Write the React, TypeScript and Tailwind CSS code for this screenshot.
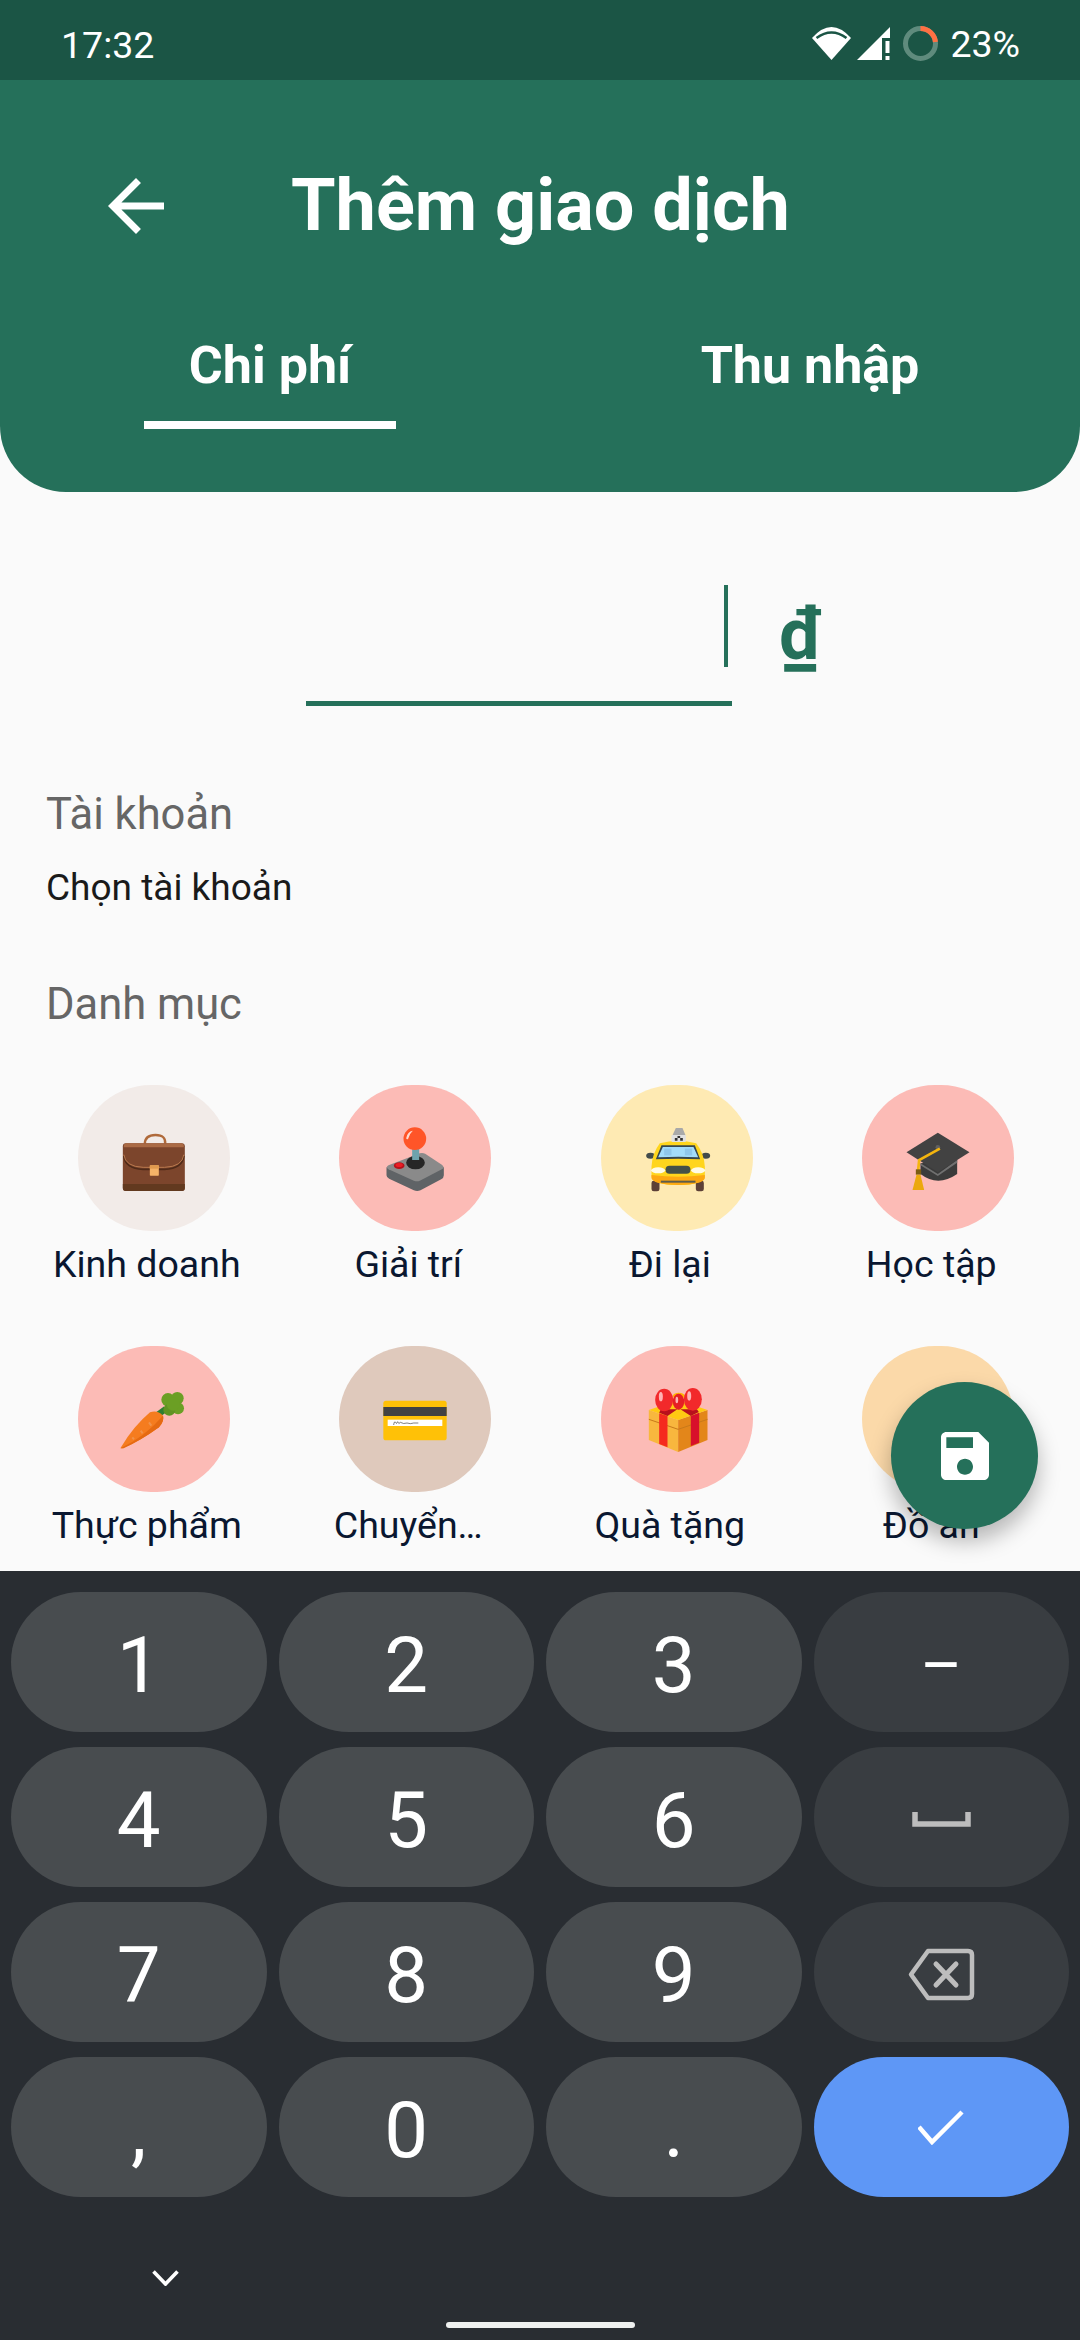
import React from "react";

const Briefcase = () => (
  <svg width="120" height="100" viewBox="-19.5 -6 360 300">
    <path d="M133 102 Q133 75 165 75 Q197 75 194 102" fill="none" stroke="#b06a3b" strokeWidth="7" />
    <rect x="67" y="100" width="186" height="143" rx="9" fill="#7c452c" />
    <path d="M67 222 H253 V234 Q253 243 244 243 H76 Q67 243 67 234Z" fill="#62391f" />
    <path d="M70 108 Q70 100 78 100 H242 Q250 100 250 108 V112 H70Z" fill="#aa6a45" />
    <path d="M70 138 Q74 176 128 178 H192 Q246 176 250 138" fill="none" stroke="#4f2a18" strokeWidth="5" />
    <path d="M70 134 Q74 170 128 172 H192 Q246 170 250 134" fill="none" stroke="#b9794e" strokeWidth="3" />
    <rect x="148" y="166" width="27" height="31" rx="2" fill="#f5b368" />
    <rect x="148" y="166" width="27" height="10" fill="#e09a4e" />
  </svg>
);

const Joystick = () => (
  <svg width="120" height="100" viewBox="-16.5 -6 360 300">
    <path d="M78 172 V196 Q78 202 86 206 L160 241 Q170 245 180 241 L242 208 Q250 204 250 196 V172Z" fill="#5f6366" />
    <path d="M84 166 L178 130 Q186 128 194 131 L244 164 Q254 172 244 178 L178 212 Q170 216 160 212 L84 178 Q74 172 84 166Z" fill="#8a8a8a" />
    <ellipse cx="116" cy="167" rx="16" ry="10" fill="#b5121b" />
    <ellipse cx="116" cy="165" rx="11" ry="6" fill="#ec1c24" />
    <ellipse cx="165" cy="158" rx="28" ry="20" fill="#262626" />
    <rect x="155" y="108" width="21" height="42" fill="#6fa3ad" />
    <circle cx="163" cy="86" r="34" fill="#ff5528" />
    <path d="M137 85 Q140 65 157 62 Q146 72 143 86 Q139 90 137 85Z" fill="#ffd9cf" />
  </svg>
);

const Taxi = () => (
  <svg width="120" height="100" viewBox="-13.5 -6 360 300">
    <rect x="90" y="212" width="24" height="32" rx="7" fill="#5d4037" />
    <rect x="223" y="212" width="24" height="32" rx="7" fill="#5d4037" />
    <ellipse cx="87" cy="137" rx="13" ry="9" fill="#424b4b" />
    <ellipse cx="253" cy="137" rx="13" ry="9" fill="#424b4b" />
    <path d="M90 170 Q92 130 115 100 Q170 85 224 100 Q248 130 250 170 V200 Q246 224 170 225 Q94 224 90 200Z" fill="#ffd51d" />
    <path d="M90 195 Q170 205 250 195 V205 Q244 224 170 225 Q96 224 90 205Z" fill="#fda812" />
    <path d="M103 148 L120 106 H220 L236 148 Q170 144 103 148Z" fill="#37474f" />
    <path d="M110 142 L124 111 H216 L230 142 Q170 138 110 142Z" fill="#a3dcfb" />
    <rect x="128" y="116" width="22" height="20" fill="#8fc7ec" />
    <rect x="190" y="116" width="22" height="20" fill="#8fc7ec" />
    <rect x="132" y="167" width="75" height="24" rx="12" fill="#455048" />
    <ellipse cx="110" cy="181" rx="21" ry="9" fill="#fffbe6" />
    <ellipse cx="230" cy="181" rx="21" ry="9" fill="#fffbe6" />
    <rect x="118" y="212" width="104" height="6" fill="#5c5c4c" />
    <path d="M163 54 H183 L192 76 H153Z" fill="#a9a9a9" />
    <rect x="150" y="75" width="43" height="21" rx="2" fill="#e0e0e0" />
    <path d="M160 84h8v8h-8zM176 84h8v8h-8zM168 78h8v6h-8z" fill="#333" />
  </svg>
);

const Cap = () => (
  <svg width="120" height="100" viewBox="-7.5 -6 360 300">
    <path d="M120 160 V192 Q172 232 230 192 V150Z" fill="#3b3b3b" />
    <path d="M120 160 L172 192 L230 150 V158 L172 198 L120 166Z" fill="#707070" />
    <path d="M172 68 L267 127 L172 187 L78 127Z" fill="#424242" />
    <circle cx="172" cy="112" r="7" fill="#616161" />
    <path d="M178 116 L116 150 L113 180" fill="none" stroke="#f4b50e" strokeWidth="8" />
    <rect x="106" y="178" width="16" height="16" fill="#7a5c12" />
    <path d="M108 194 H120 L131 240 H96Z" fill="#eba80d" />
  </svg>
);

const Carrot = () => (
  <svg width="120" height="100" viewBox="0 0 360 300">
    <path d="M180 145 L215 120" stroke="#2e7d32" strokeWidth="18" />
    <path d="M80 236 Q120 170 168 130 Q190 122 207 140 Q212 155 195 175 Q140 215 88 238 Q78 240 80 236Z" fill="#f57c1f" />
    <path d="M82 236 Q150 205 207 140 Q212 155 195 175 Q140 215 88 238Z" fill="#e56a12" />
    <path d="M165 160l7 10M140 185l6 8M115 205l5 6" stroke="#f0924a" strokeWidth="6" />
    <circle cx="222" cy="92" r="20" fill="#6b9f24" />
    <circle cx="250" cy="88" r="19" fill="#6b9f24" />
    <circle cx="252" cy="118" r="18" fill="#6b9f24" />
    <circle cx="226" cy="122" r="18" fill="#5f9322" />
    <circle cx="238" cy="105" r="20" fill="#6b9f24" />
  </svg>
);

const Card = () => (
  <svg width="120" height="100" viewBox="0 0 360 300">
    <rect x="85" y="95" width="190" height="119" rx="8" fill="#ffc107" />
    <rect x="85" y="114" width="190" height="27" fill="#424242" />
    <rect x="98" y="152" width="164" height="19" fill="#ffffff" />
    <path d="M116 168 Q118 154 122 160 Q124 168 128 158 Q131 168 136 160 Q146 166 156 162 Q166 166 176 162 H190" fill="none" stroke="#424242" strokeWidth="2" />
  </svg>
);

const Gift = () => (
  <svg width="120" height="100" viewBox="-13.5 -3 360 300">
    <path d="M82 120 L170 150 V246 L82 210Z" fill="#f8b73e" />
    <path d="M170 150 L258 120 V210 L170 246Z" fill="#e3861a" />
    <path d="M82 120 L170 90 L258 120 L170 150Z" fill="#ffc913" />
    <path d="M82 148 L170 178 L258 148" fill="none" stroke="#c8791a" strokeWidth="3" />
    <path d="M113 130 L138 138 V232 L113 222Z" fill="#f52a1e" />
    <path d="M208 138 L233 128 V218 L208 228Z" fill="#d8102b" />
    <path d="M118 118 H226 L232 126 L208 138 L172 115 L138 138 L113 128Z" fill="#b8101c" />
    <ellipse cx="172" cy="78" rx="18" ry="10" fill="#ffb300" />
    <ellipse cx="128" cy="90" rx="27" ry="34" fill="#f2292b" />
    <ellipse cx="214" cy="88" rx="27" ry="34" fill="#f2292b" />
    <ellipse cx="171" cy="95" rx="17" ry="24" fill="#e61f25" />
    <ellipse cx="118" cy="80" rx="6" ry="14" fill="#ffb3b3" />
    <ellipse cx="203" cy="78" rx="6" ry="14" fill="#ffb3b3" />
    <ellipse cx="166" cy="90" rx="4" ry="10" fill="#ffb3b3" />
  </svg>
);

const Burger = () => (
  <svg width="120" height="100" viewBox="0 0 360 300">
    <path d="M80 150 Q90 85 180 85 Q270 85 280 150Z" fill="#d98a1e" />
    <rect x="80" y="150" width="200" height="70" rx="16" fill="#8d5524" />
  </svg>
);

const cats = [
  { label: "Kinh doanh", bg: "bg-[#f2ebe8]", icon: <Briefcase /> },
  { label: "Giải trí", bg: "bg-[#fcbbb6]", icon: <Joystick /> },
  { label: "Đi lại", bg: "bg-[#feeab3]", icon: <Taxi /> },
  { label: "Học tập", bg: "bg-[#fcbbb6]", icon: <Cap /> },
  { label: "Thực phẩm", bg: "bg-[#fcbbb6]", icon: <Carrot /> },
  { label: "Chuyển…", bg: "bg-[#dfc9bc]", icon: <Card /> },
  { label: "Quà tặng", bg: "bg-[#fcbbb6]", icon: <Gift /> },
  { label: "Đồ ăn", bg: "bg-[#fbd9a9]", icon: <Burger /> },
];

const Key = ({ children }: { children: React.ReactNode }) => (
  <div className="h-[140px] rounded-full bg-[#484c4f] text-center text-[78px] leading-[132px] pt-[8px] text-white">{children}</div>
);

const FnKey = ({ children, blue }: { children: React.ReactNode; blue?: boolean }) => (
  <div className={blue ? "h-[140px] rounded-full bg-[#5e97f6] flex items-center justify-center" : "h-[140px] rounded-full bg-[#393d41] flex items-center justify-center"}>
    {children}
  </div>
);

export default function App() {
  return (
    <div className="relative w-[1080px] h-[2340px] overflow-hidden flex flex-col bg-[#fafafa] font-['Roboto',sans-serif]">
      {/* status bar */}
      <div className="h-[80px] shrink-0 bg-[#1b5545] flex items-center pl-[61px] pr-[60px] text-white text-[37.5px] leading-[44px]">
        <span className="pt-[9px]">17:32</span>
        <div className="ml-auto flex items-center pt-[6px]">
          <svg width="39" height="33" viewBox="0 0 39 33">
            <path d="M0 11 Q19.5 -11 39 11 L19.5 33Z" fill="#ffffff" />
            <path d="M4.5 11 Q19.5 0 34.5 11" fill="none" stroke="#1b5545" strokeWidth="2.6" />
          </svg>
          <svg width="33" height="33" viewBox="0 0 33 33" className="ml-[6px]">
            <path d="M0 33 L33 0 V11 H25 V33Z" fill="#ffffff" />
            <rect x="28.5" y="14" width="4" height="12" fill="#ffffff" />
            <rect x="28.5" y="29" width="4" height="4" fill="#ffffff" />
          </svg>
          <svg width="35" height="35" viewBox="0 0 35 35" className="ml-[13px]">
            <circle cx="17.5" cy="17.5" r="15" fill="none" stroke="#5f8b7d" strokeWidth="5" />
            <path d="M17.5 2.5 A15 15 0 0 1 32.4 16" fill="none" stroke="#ff7043" strokeWidth="5" />
          </svg>
          <span className="ml-[12px] pt-[2px]">23%</span>
        </div>
      </div>

      {/* header */}
      <div className="h-[412px] shrink-0 bg-[#25705a] rounded-b-[66px] text-white">
        <div className="mt-[76px] h-[100px] flex items-center pl-[94px]">
          <svg width="84" height="84" viewBox="0 0 24 24" fill="#ffffff">
            <path d="M20 11H7.83l5.59-5.59L12 4l-8 8 8 8 1.41-1.41L7.83 13H20v-2z" />
          </svg>
          <span className="ml-[113px] text-[72px] leading-[100px] font-bold">Thêm giao dịch</span>
        </div>
        <div className="grid grid-cols-2 mt-[80px]">
          <div className="flex flex-col items-center">
            <span className="text-[52px] leading-[60px] font-bold">Chi phí</span>
            <div className="mt-[25px] w-[252px] h-[8px] bg-white" />
          </div>
          <div className="flex flex-col items-center">
            <span className="text-[52px] leading-[60px] font-bold">Thu nhập</span>
          </div>
        </div>
      </div>

      {/* body */}
      <div className="flex-1 min-h-0 overflow-hidden">
        <div className="flex items-start mt-[90px] ml-[306px]">
          <div className="w-[426px] h-[124px] border-b-[5px] border-[#25705a] flex justify-end pr-[4px]">
            <div className="w-[4px] h-[82px] mt-[3px] bg-[#25705a]" />
          </div>
          <span className="ml-[47px] mt-[3px] text-[72px] leading-[100px] font-bold text-[#25705a]">₫</span>
        </div>
        <div className="ml-[46px] mt-[84px] text-[43.5px] leading-[50px] text-[#666666]">Tài khoản</div>
        <div className="ml-[46px] mt-[26px] text-[37px] leading-[44px] text-[#1a1a1a]">Chọn tài khoản</div>
        <div className="ml-[46px] mt-[70px] text-[43.5px] leading-[50px] text-[#666666]">Danh mục</div>
        <div className="mt-[55px] ml-[23px] w-[1046px] grid grid-cols-4 gap-y-[60px]">
          {cats.map((c) => (
            <div key={c.label} className="flex flex-col items-center">
              <div className={`w-[152px] h-[146px] rounded-full flex items-center justify-center overflow-hidden ${c.bg}`}>{c.icon}</div>
              <div className="mt-[11px] pr-[14px] text-[37.5px] leading-[44px] text-[#0a1730] whitespace-nowrap">{c.label}</div>
            </div>
          ))}
        </div>
      </div>

      {/* keyboard */}
      <div className="h-[769px] shrink-0 bg-[#292d32] pt-[21px]">
        <div className="grid grid-cols-4 gap-x-[12px] gap-y-[15px] px-[11px]">
          <Key>1</Key>
          <Key>2</Key>
          <Key>3</Key>
          <FnKey>
            <span className="text-white text-[64px] leading-none pt-[10px]">–</span>
          </FnKey>
          <Key>4</Key>
          <Key>5</Key>
          <Key>6</Key>
          <FnKey>
            <svg width="59" height="15" viewBox="0 0 59 15" className="mt-[4px]">
              <path d="M3 0 V12 H56 V0" fill="none" stroke="#bdbdbd" strokeWidth="5.5" />
            </svg>
          </FnKey>
          <Key>7</Key>
          <Key>8</Key>
          <Key>9</Key>
          <FnKey>
            <svg width="67" height="53" viewBox="0 0 67 53" className="mt-[4px]">
              <path d="M3 26.5 L20 3 H60 Q64 3 64 7 V46 Q64 50 60 50 H20Z" fill="none" stroke="#bdbdbd" strokeWidth="4.5" strokeLinejoin="round" />
              <path d="M28 16 L48 37 M48 16 L28 37" fill="none" stroke="#bdbdbd" strokeWidth="5" strokeLinecap="round" />
            </svg>
          </FnKey>
          <Key>,</Key>
          <Key>0</Key>
          <Key>.</Key>
          <FnKey blue>
            <svg width="46" height="35" viewBox="0 0 46 35">
              <path d="M1 17 L14 32 L44 2" fill="none" stroke="#ffffff" strokeWidth="4.5" />
            </svg>
          </FnKey>
        </div>
        <div className="pl-[152px] pt-[73px]">
          <svg width="27" height="16" viewBox="0 0 27 16" className="block">
            <path d="M1.5 1.5 L13.5 14 L25.5 1.5" fill="none" stroke="#ffffff" strokeWidth="3.6" />
          </svg>
        </div>
        <div className="mx-auto mt-[36px] w-[189px] h-[6px] rounded-full bg-[#eef0ef]" />
      </div>

      {/* FAB */}
      <div className="absolute left-[891px] top-[1382px] w-[147px] h-[147px] rounded-full bg-[#25705a] flex items-center justify-center shadow-[0_12px_22px_rgba(0,0,0,0.28)]">
        <svg width="64" height="64" viewBox="0 0 24 24" fill="#ffffff">
          <path d="M17 3H5c-1.11 0-2 .9-2 2v14c0 1.1.89 2 2 2h14c1.1 0 2-.9 2-2V7l-4-4zm-5 16c-1.66 0-3-1.34-3-3s1.34-3 3-3 3 1.34 3 3-1.34 3-3 3zm3-10H5V5h10v4z" />
        </svg>
      </div>
    </div>
  );
}
